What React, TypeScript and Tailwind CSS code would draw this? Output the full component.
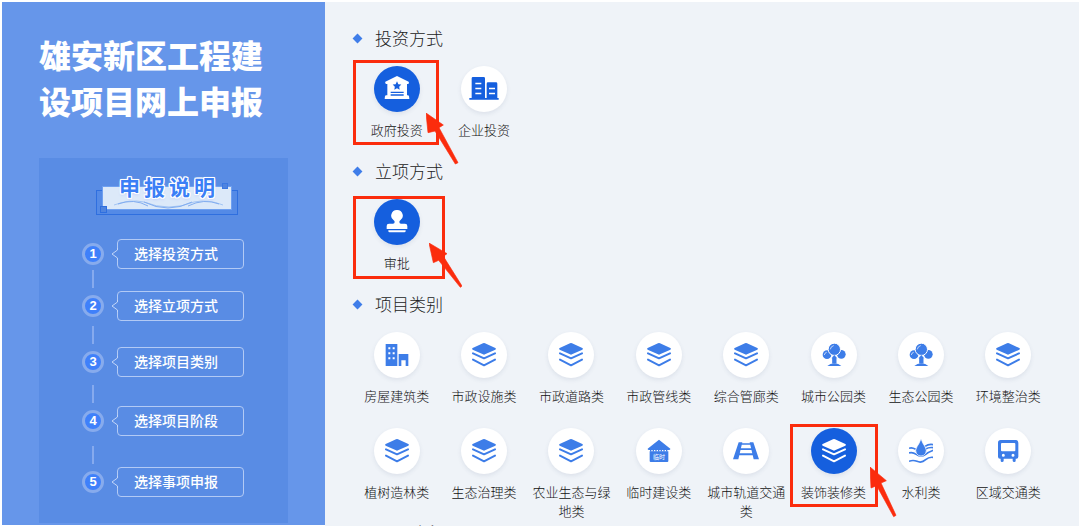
import React, { useState } from "react";

type IconName =
  | "government"
  | "enterprise"
  | "stamp"
  | "house"
  | "layers"
  | "tree"
  | "shed"
  | "rail"
  | "water"
  | "bus";

function Icon({ name }: { name: IconName }) {
  switch (name) {
    case "government":
      return (
        <svg viewBox="0 0 72 72" className="size-6 overflow-visible" aria-hidden="true">
          <path
            fill="currentColor"
            fillRule="evenodd"
            d="M36 -3 L71 14 Q74 21 66 21 V55 H70 Q73 57 73 66 H-1 Q-1 57 2 55 H7 V21 Q-1 21 1 14Z M36 13 L32 21.500 L23 22.500 L29.500 29 L28 38 L36 33.500 L44 38 L42.500 29 L49 22.500 L40 21.500Z M17 44 V48 H56 V44Z M17 52 V56 H56 V52Z"
          />
        </svg>
      );
    case "enterprise":
      return (
        <svg viewBox="-6 0 90 72" className="h-6 w-[30px]" aria-hidden="true">
          <path
            fill="currentColor"
            fillRule="evenodd"
            d="M2 4 Q2 0 6 0 H38 Q42 0 42 4 V63 H47 V20 Q47 16 51 16 H75 Q79 16 79 20 V63 H83 V68 H-5 V63 H2Z M13 17 V22 H31 V17Z M13 32 V37 H31 V32Z M13 47 V52 H31 V47Z M54 32 V37 H72 V32Z M54 47 V52 H72 V47Z"
          />
        </svg>
      );
    case "stamp":
      return (
        <svg viewBox="0 0 72 72" className="size-6" aria-hidden="true">
          <path
            fill="currentColor"
            d="M36 0 A17 17 0 0 1 46 31 Q43 33 43 36 Q43 41 48 41 H60 Q67 41 67 48 V57 H5 V48 Q5 41 12 41 H24 Q29 41 29 36 Q29 33 26 31 A17 17 0 0 1 36 0Z M10 60.500 H62 V63 Q62 67 58 67 H14 Q10 67 10 63Z"
          />
        </svg>
      );
    case "house":
      return (
        <svg viewBox="0 0 72 72" className="size-6" aria-hidden="true">
          <path
            fill="currentColor"
            fillRule="evenodd"
            d="M2 3 H37 V69 H2Z M10 13 V19 H16 V13Z M23 13 V19 H29 V13Z M10 28 V34 H16 V28Z M23 28 V34 H29 V28Z M10 43 V49 H16 V43Z M23 43 V49 H29 V43Z M41 33 H70 V69 H62 V52 H49 V69 H41Z"
          />
        </svg>
      );
    case "layers":
      return (
        <svg viewBox="0 0 72 72" className="size-6" aria-hidden="true">
          <path
            fill="currentColor"
            d="M33 1 Q36 -1 39 1 L70 15 Q73 17 70 20 L39 34 Q36 36 33 34 L2 20 Q-1 17 2 15Z"
          />
          <path
            fill="none"
            stroke="currentColor"
            strokeWidth="6"
            strokeLinecap="round"
            strokeLinejoin="round"
            d="M3 31 L36 46 L69 31 M3 50 L36 67 L69 50"
          />
        </svg>
      );
    case "tree":
      return (
        <svg viewBox="0 0 72 72" className="size-6" aria-hidden="true">
          <g fill="currentColor">
            <circle cx="15" cy="35" r="13" />
            <circle cx="58" cy="34" r="13" />
            <circle cx="37" cy="19" r="18.500" stroke="#fff" strokeWidth="3" />
            <path d="M28 46 L37 35 L46 46 H44 V62 H30 V46Z" stroke="#fff" strokeWidth="1" />
            <path d="M16 69 Q24 61 37 61 Q50 61 58 69Z" />
          </g>
          <path
            fill="none"
            stroke="#fff"
            strokeWidth="2"
            strokeLinecap="round"
            d="M25 18 Q26 10 34 8 M7 35 Q8 29 13 28"
          />
        </svg>
      );
    case "shed":
      return (
        <svg viewBox="0 0 72 72" className="size-6" aria-hidden="true">
          <path
            fill="currentColor"
            d="M36 2 L70 29 Q71 33 65 33 H7 Q1 33 2 29Z M8 37 H64 V66 Q64 69 61 69 H11 Q8 69 8 66Z"
          />
          <path d="M9 35 H64" stroke="currentColor" strokeWidth="5" strokeDasharray="4 4" />
          <text
            x="36"
            y="60"
            textAnchor="middle"
            fill="#fff"
            className="font-['Noto_Sans_CJK_SC',sans-serif] text-[18px]"
          >
            临时
          </text>
        </svg>
      );
    case "rail":
      return (
        <svg viewBox="-4 0 80 72" className="h-6 w-7" aria-hidden="true">
          <path
            fill="currentColor"
            d="M14 10 H25 L13 61 H-3Z M47 10 H58 L75 61 H59Z M22 13 H50 V17 H22Z M18 28 H54 V33 H18Z M14 43 H58 V49 H14Z"
          />
        </svg>
      );
    case "water":
      return (
        <svg viewBox="0 0 72 72" className="size-6" aria-hidden="true">
          <g fill="none" stroke="currentColor" strokeWidth="5">
            <path d="M0 28 Q8 24 20 31 M0 42 Q10 38 22 46 Q36 56 50 46 Q58 40 73 34 M50 30 Q60 24 73 26 M48 22 Q60 14 73 17 M0 67 Q12 62 24 67 Q38 73 50 62 Q60 53 73 55" />
          </g>
          <path
            fill="currentColor"
            stroke="#fff"
            strokeWidth="2"
            d="M36 -1 Q40 12 48 23 Q55 34 50 43 Q45 51 36 51 Q27 51 22 43 Q17 34 24 23 Q32 12 36 -1Z"
          />
        </svg>
      );
    case "bus":
      return (
        <svg viewBox="0 0 72 72" className="size-6" aria-hidden="true">
          <path
            fill="currentColor"
            fillRule="evenodd"
            d="M14 3 H59 Q67 3 67 11 V53 Q67 59 61 59 H59 V65 Q59 69 55 69 Q50 69 50 65 V59 H23 V65 Q23 69 18 69 Q14 69 14 65 V59 H12 Q6 59 6 53 V11 Q6 3 14 3Z M18 12 Q15 12 15 15 V34 Q15 37 18 37 H55 Q58 37 58 34 V15 Q58 12 55 12Z M22 44.500 A4.500 4.500 0 1 0 22 53.500 A4.500 4.500 0 1 0 22 44.500Z M51 44.500 A4.500 4.500 0 1 0 51 53.500 A4.500 4.500 0 1 0 51 44.500Z"
          />
        </svg>
      );
  }
}

interface Mark {
  box: string;
  arrow: string;
  points: string;
}

interface Option {
  label: string;
  icon: IconName;
  tone?: string;
  mark?: Mark;
}

interface Group {
  title: string;
  options: Option[];
  initial: string;
}

const groups: Group[] = [
  {
    title: "投资方式",
    initial: "政府投资",
    options: [
      {
        label: "政府投资",
        icon: "government",
        mark: {
          box: "left-0 -top-1.5 h-[85px] w-[86px]",
          arrow: "left-[73px] top-[47px]",
          points: "0,0 52,36 39,44 96,149 88,153 27,54 6,59",
        },
      },
      { label: "企业投资", icon: "enterprise", tone: "text-[#155fde]" },
    ],
  },
  {
    title: "立项方式",
    initial: "审批",
    options: [
      {
        label: "审批",
        icon: "stamp",
        mark: {
          box: "left-0 -top-[3px] h-[83px] w-[92px]",
          arrow: "left-[76px] top-11",
          points: "0,0 54,32 43,40 99,129 94,133 29,52 13,59",
        },
      },
    ],
  },
  {
    title: "项目类别",
    initial: "装饰装修类",
    options: [
      { label: "房屋建筑类", icon: "house" },
      { label: "市政设施类", icon: "layers" },
      { label: "市政道路类", icon: "layers" },
      { label: "市政管线类", icon: "layers" },
      { label: "综合管廊类", icon: "layers" },
      { label: "城市公园类", icon: "tree" },
      { label: "生态公园类", icon: "tree" },
      { label: "环境整治类", icon: "layers" },
      { label: "植树造林类", icon: "layers" },
      { label: "生态治理类", icon: "layers" },
      { label: "农业生态与绿地类", icon: "layers" },
      { label: "临时建设类", icon: "shed" },
      { label: "城市轨道交通类", icon: "rail" },
      {
        label: "装饰装修类",
        icon: "layers",
        mark: {
          box: "left-0 -top-1 h-[83px] w-[88px]",
          arrow: "left-20 top-[39px]",
          points: "0,0 49,41 33,48 78,145 71,149 20,56 3,63",
        },
      },
      { label: "水利类", icon: "water" },
      { label: "区域交通类", icon: "bus" },
    ],
  },
  { title: "项目阶段", initial: "", options: [] },
];

// The gap class is the space between a step and the one before it.
const steps = [
  { label: "选择投资方式", gap: "" },
  { label: "选择立项方式", gap: "h-[22px]" },
  { label: "选择项目类别", gap: "h-[26px]" },
  { label: "选择项目阶段", gap: "h-[29px]" },
  { label: "选择事项申报", gap: "h-[31px]" },
];

function Highlight({ mark }: { mark: Mark }) {
  return (
    <span className="pointer-events-none" aria-hidden="true">
      <span className={`absolute z-10 border-[3px] border-[#fb2c0d] ${mark.box}`} />
      <svg viewBox="0 0 99 156" className={`absolute z-10 h-[52px] w-[33px] ${mark.arrow}`}>
        <polygon
          points={mark.points}
          fill="#fb2c0d"
          stroke="#fb2c0d"
          strokeWidth="2"
          strokeLinejoin="round"
        />
      </svg>
    </span>
  );
}

function OptionGroup({ group }: { group: Group }) {
  const [selected, setSelected] = useState(group.initial);
  return (
    <section>
      <h2 className="flex h-6 items-center text-[17px] leading-6 font-light text-[#222]">
        <span className="mr-3.5 ml-px size-[7px] rotate-45 bg-[#3f7de9]" />
        {group.title}
      </h2>
      <div className="mt-4 grid grid-cols-8 gap-y-[23px]">
        {group.options.map((o) => {
          const active = o.label === selected;
          return (
            <div key={o.label} className="relative">
              <button
                type="button"
                aria-pressed={active}
                onClick={() => setSelected(o.label)}
                className="flex w-full flex-col items-center gap-2"
              >
                <span
                  className={`flex size-[46px] items-center justify-center rounded-full shadow-[0_2px_4px_rgba(60,80,120,0.1)] ${
                    active ? "bg-[#155fde] text-white" : `bg-white ${o.tone ?? "text-[#3d7de8]"}`
                  }`}
                >
                  <Icon name={o.icon} />
                </span>
                <span className="h-[19px] w-20 text-[13px] leading-[19px] font-light text-[#111]">
                  {o.label}
                </span>
              </button>
              {o.mark && <Highlight mark={o.mark} />}
            </div>
          );
        })}
      </div>
    </section>
  );
}

function Banner() {
  return (
    <div className="relative ml-[57px] flex h-10 w-[142px] justify-center">
      <svg viewBox="0 0 142 40" className="absolute inset-0 h-10 w-[142px]" aria-hidden="true">
        <rect x="0.500" y="14.500" width="141" height="24" fill="#548ae6" stroke="#2f6fdf" />
        <rect x="6.500" y="10.500" width="129" height="23" fill="#dce9f9" stroke="#6fa0f0" />
        <path
          d="M18 29 Q34 23 48 26 Q60 31 73 31 Q86 31 98 26 Q112 23 127 29"
          fill="none"
          stroke="#a3c5f4"
        />
        <path
          d="M22 28 Q38 22 52 30 M48 26 Q72 38 96 26 M92 30 Q108 22 123 28"
          fill="none"
          stroke="#82adf0"
        />
        <rect x="4.500" y="30.500" width="6" height="6" fill="#4f84df" stroke="#2f6fdf" />
        <rect x="126.500" y="7.500" width="5" height="5" fill="#4f84df" stroke="#3b78e2" />
      </svg>
      <h2 className="relative flex gap-1 text-[21px] leading-5 font-bold text-[#3b7ff6] [text-shadow:1px_0_#fff,-1px_0_#fff,0_1px_#fff,0_-1px_#fff,1px_1px_#fff,-1px_-1px_#fff,1px_-1px_#fff,-1px_1px_#fff,0_0_2px_#fff,0_2px_3px_#c3cffa]">
        {["申", "报", "说", "明"].map((c) => (
          <span key={c}>{c}</span>
        ))}
      </h2>
    </div>
  );
}

function Sidebar() {
  return (
    <aside className="mb-px flex w-[323px] shrink-0 flex-col overflow-hidden bg-[#6696ea] px-[37px] pt-[29px]">
      <h1 className="text-[32px] leading-[46px] font-black text-white">
        雄安新区工程建设项目网上申报
      </h1>
      <div className="mt-[35px] mb-0.5 flex-1 bg-[#598ce4] pt-[18px]">
        <Banner />
        <ol className="mt-[23px] pl-[43px]">
          {steps.map((s, i) => (
            <li key={s.label}>
              {i > 0 && (
                <div className={`flex w-[22px] items-end justify-center pb-[3px] ${s.gap}`}>
                  <span className="h-[18px] w-0.5 bg-[#86aaee]" />
                </div>
              )}
              <div className="flex h-[30px] items-center">
                <span className="flex size-[22px] items-center justify-center rounded-full border-[3px] border-[#87abed] bg-[#3f80fa] font-['Liberation_Sans',sans-serif] text-[13px] leading-4 font-bold text-white">
                  {i + 1}
                </span>
                <div className="relative ml-[13px] flex h-[30px] w-[127px] items-center rounded border border-[#b2caf5] pb-0.5 pl-4 text-[14px] leading-5 font-medium text-white">
                  <svg
                    viewBox="0 0 8 12"
                    className="absolute top-2 -left-[7px] h-3 w-2"
                    aria-hidden="true"
                  >
                    <path d="M6 1 H8 V11 H6Z" fill="#598ce4" />
                    <path d="M6.500 0 V2 L1 6 L6.500 10 V12" fill="none" stroke="#c3d6f8" />
                  </svg>
                  {s.label}
                </div>
              </div>
            </li>
          ))}
        </ol>
      </div>
    </aside>
  );
}

export default function App() {
  return (
    <div className="flex h-screen overflow-hidden bg-white pt-0.5 pr-px pl-0.5 font-['Noto_Sans_CJK_SC',sans-serif]">
      <Sidebar />
      <main className="flex min-w-0 flex-1 flex-col gap-5 overflow-hidden bg-[#eff3f8] pt-6 pr-[27px] pl-7">
        {groups.map((g) => (
          <OptionGroup key={g.title} group={g} />
        ))}
      </main>
    </div>
  );
}
